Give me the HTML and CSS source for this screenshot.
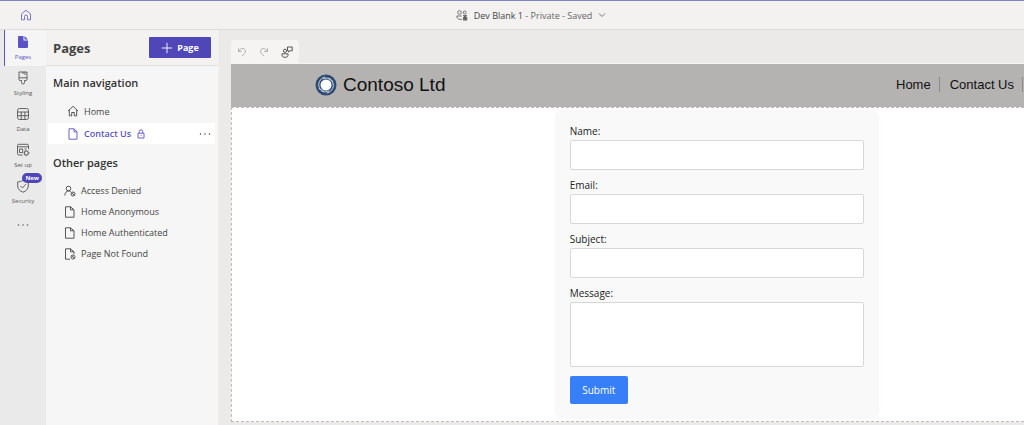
FILE: index.html
```
<!DOCTYPE html>
<html lang="en">
<head>
    <meta charset="UTF-8">
    <meta name="viewport" content="width=device-width, initial-scale=1.0">
    <title>Dev Blank 1 - Pages</title>
    <link rel="stylesheet" href="styles.css">
</head>
<body>
    <header class="topbar">
        <a href="#" class="home-link" aria-label="Home">
            <svg class="icon" viewBox="0 0 12 12"><path d="M1.500 5 6 1.200 10.500 5v5.800H7.500V7.500a1.500 1.500 0 0 0-3 0v3.300h-3z"/></svg>
        </a>
        <button class="site-status">
            <svg class="icon" viewBox="0 0 12 12"><circle cx="3.500" cy="3.500" r="1.800"/><circle cx="8.700" cy="3.500" r="1.500"/><path d="M6 10.300C2.800 11 .8 9.600.8 7h5M7 6.500h4"/><path class="solid" d="M7 8h.8V6.800h2.500V8h.9v3.500H7z"/></svg>
            <span><span class="site-name">Dev Blank 1</span> - Private - Saved</span>
            <svg class="chevron" viewBox="0 0 8 8"><path d="M1 2.500 4 5.500l3-3"/></svg>
        </button>
    </header>

    <div class="workspace">
        <nav class="rail">
            <button class="rail-item active">
                <svg class="rail-icon" viewBox="0 0 14 14"><path class="solid" d="M3 1h4.500v4.500H12V12a1 1 0 0 1-1 1H3a1 1 0 0 1-1-1V2a1 1 0 0 1 1-1zM8.500 1 12 4.500H8.500z"/></svg>
                Pages
            </button>
            <button class="rail-item">
                <svg class="rail-icon" viewBox="0 0 14 14"><path d="M3 1h8v7.500a1 1 0 0 1-1 1H8.500v2a1.500 1.500 0 0 1-3 0v-2H4a1 1 0 0 1-1-1zM3 6.800h8M7 1v2M9 1v3"/></svg>
                Styling
            </button>
            <button class="rail-item">
                <svg class="rail-icon" viewBox="0 0 14 14"><rect x="1.500" y="1.500" width="11" height="11" rx="2"/><path d="M1.500 5h11M1.500 8.700h11M5.200 5v7.500M8.900 5v7.500"/></svg>
                Data
            </button>
            <button class="rail-item">
                <svg class="rail-icon" viewBox="0 0 14 14"><path d="M6.500 12H3a1.500 1.500 0 0 1-1.500-1.500v-8A1.200 1.200 0 0 1 2.700 1.300h8.600a1.200 1.200 0 0 1 1.200 1.200V6M1.500 3.800h11M3.500 6h3.200v3.500H3.500zM8.500 6h2"/><circle cx="10.300" cy="10" r="2"/><path d="M10.300 7v1M10.300 12v1.300M7.500 10h1M12.300 10h1.300M8.300 8l.7.700M11.600 11.300l.8.800M12.400 8l-.8.700M9 11.300l-.8.800"/></svg>
                Set up
            </button>
            <button class="rail-item">
                <svg class="rail-icon" viewBox="0 0 14 14"><path d="M7 1C5.500 2.300 3.700 2.800 1.700 2.900V7c0 3 2 5 5.300 6.200C10.300 12 12.300 10 12.300 7V2.900C10.300 2.800 8.500 2.300 7 1zM4.500 7l1.900 1.900 3.500-3.700"/></svg>
                Security
                <span class="badge">New</span>
            </button>
            <button class="rail-item rail-more" aria-label="More">
                <svg class="rail-icon" viewBox="0 0 14 14"><path class="dots" d="M2.500 7h.01M7 7h.01M11.500 7h.01"/></svg>
            </button>
        </nav>

        <aside class="panel">
            <div class="panel-header">
                <h1>Pages</h1>
                <button class="add-page">
                    <svg class="icon" viewBox="0 0 12 12"><path d="M6 .8v10.400M.8 6h10.400"/></svg>
                    Page
                </button>
            </div>

            <h2>Main navigation</h2>
            <ul class="page-list main-list">
                <li>
                    <a href="#">
                        <svg class="icon" viewBox="0 0 12 12"><path d="M1 6 6 1.300 11 6M2.300 5v5.800h2.400V7.500h2.600v3.300h2.400V5"/></svg>
                        Home
                    </a>
                </li>
                <li class="selected">
                    <a href="#">
                        <svg class="icon" viewBox="0 0 12 12"><path d="M2 .8h5l3 3v7.400H2zM7 .8v3h3"/></svg>
                        Contact Us
                        <svg class="lock" viewBox="0 0 10 10"><path d="M2 4.200h6v4.800H2zM3.300 4.200V2.500a1.700 1.700 0 0 1 3.400 0v1.700M5 6.200v.8"/></svg>
                    </a>
                    <button class="more" aria-label="More options">
                        <svg class="icon" viewBox="0 0 12 12"><path class="dots" d="M1.500 6h.01M6 6h.01M10.500 6h.01"/></svg>
                    </button>
                </li>
            </ul>

            <h2>Other pages</h2>
            <ul class="page-list other-list">
                <li>
                    <a href="#">
                        <svg class="icon" viewBox="0 0 12 12"><circle cx="4.500" cy="3.500" r="2.300"/><path d="M.8 10.500C1 7.500 2.500 6 4.500 6c1 0 1.800.3 2.300.8"/><circle cx="9" cy="9" r="2"/><path d="m7.600 7.600 2.800 2.800"/></svg>
                        Access Denied
                    </a>
                </li>
                <li>
                    <a href="#">
                        <svg class="icon" viewBox="0 0 12 12"><path d="M1.500.8h5l3.500 3v7.400H1.500zM6.500.8v3H10"/></svg>
                        Home Anonymous
                    </a>
                </li>
                <li>
                    <a href="#">
                        <svg class="icon" viewBox="0 0 12 12"><path d="M1.500.8h5l3.500 3v7.400H1.500zM6.500.8v3H10"/></svg>
                        Home Authenticated
                    </a>
                </li>
                <li>
                    <a href="#">
                        <svg class="icon" viewBox="0 0 12 12"><path d="M6 11.200H1.500V.8h5l3.500 3V6M6.500.8v3H10"/><circle cx="9" cy="9" r="2"/><path d="m7.600 7.600 2.800 2.800"/></svg>
                        Page Not Found
                    </a>
                </li>
            </ul>
        </aside>

        <main class="canvas">
            <div class="toolbar">
                <button class="tool" aria-label="Undo" disabled>
                    <svg class="tool-icon" viewBox="0 0 10 10"><path d="M1.500 1.200v3.300h3.300M1.700 4.300C3.500 1.500 5.500 1 7 1.800c1.800 1 2 3.200.7 4.600L5 9"/></svg>
                </button>
                <button class="tool" aria-label="Redo" disabled>
                    <svg class="tool-icon" viewBox="0 0 10 10"><path d="M8.500 1.200v3.300H5.200M8.300 4.300C6.500 1.500 4.500 1 3 1.800c-1.800 1-2 3.200-.7 4.600L5 9"/></svg>
                </button>
                <button class="tool" aria-label="Feedback">
                    <svg class="icon" viewBox="0 0 12 12"><circle cx="4" cy="4.800" r="1.600"/><path d="M1 7.800h6v1.400C7 10.700 5.800 11.300 4 11.300S1 10.700 1 9.200zM6.500 1h4.700v3.800H8.800L7.500 6V4.800h-1z"/></svg>
                </button>
            </div>

            <div class="site">
                <div class="site-header">
                    <a href="#" class="brand">
                        <svg class="logo" viewBox="0 0 22 22">
                            <circle class="logo-disc" cx="11" cy="11" r="10.500"/>
                            <circle class="logo-hole" cx="11" cy="11" r="5.500"/>
                            <path class="logo-swirl" d="M9 17.500C4.500 16 2.500 11.500 4.500 7.500 5.500 5.300 7.500 3.500 10 3M13 4.500c4.500 1.500 6.500 6 4.500 10-1 2.200-3 4-5.500 4.500M8 5c4-2 8-.5 10 3M14 17c-4 2-8 .5-10-3"/>
                        </svg>
                        Contoso Ltd
                    </a>
                    <nav class="site-nav">
                        <a href="#">Home</a>
                        <a href="#">Contact Us</a>
                    </nav>
                </div>
                <div class="site-body">
                    <form class="contact-form">
                        <label for="name">Name:</label>
                        <input type="text" id="name" name="name">
                        <label for="email">Email:</label>
                        <input type="email" id="email" name="email">
                        <label for="subject">Subject:</label>
                        <input type="text" id="subject" name="subject">
                        <label for="message">Message:</label>
                        <textarea id="message" name="message"></textarea>
                        <button type="submit" class="submit">Submit</button>
                    </form>
                </div>
            </div>
        </main>
    </div>
</body>
</html>
```

FILE: styles.css
```
* {
    box-sizing: border-box;
}

body {
    margin: 0;
    min-height: 100vh;
    display: flex;
    flex-direction: column;
    background: #ebeae9;
    color: #444;
    font-family: "Open Sans", "Noto Sans", sans-serif;
    font-size: 9px;
    overflow-x: hidden;
}

button {
    font-family: inherit;
    color: inherit;
    background: none;
    border: none;
    padding: 0;
}

a {
    color: inherit;
    text-decoration: none;
}

svg {
    fill: none;
    stroke: currentColor;
    stroke-width: 0.9;
    flex-shrink: 0;
}

.icon {
    width: 12px;
    height: 12px;
}

.solid {
    fill: currentColor;
    stroke: none;
}

.dots {
    stroke-width: 1.5;
    stroke-linecap: round;
}

/* top bar */
.topbar {
    display: grid;
    grid-template-columns: 1fr auto 1fr;
    align-items: center;
    height: 30px;
    padding-left: 20px;
    background: #f3f2f1;
    border-top: 1px solid #8481cc;
    border-bottom: 1px solid #dcdbda;
}

.home-link {
    display: flex;
    color: #6b66c9;
}

.site-status {
    display: flex;
    align-items: center;
    gap: 6px;
    padding-left: 18px;
    font-size: 9px;
    color: #666;
}

.site-name {
    color: #444;
}

.chevron {
    width: 8px;
    height: 8px;
}

.workspace {
    flex: 1;
    display: flex;
}

/* left rail */
.rail {
    width: 46px;
    flex-shrink: 0;
    background: #eaeaea;
}

.rail-item {
    position: relative;
    display: flex;
    flex-direction: column;
    align-items: center;
    justify-content: center;
    gap: 4px;
    width: 100%;
    height: 36px;
    font-size: 6px;
    line-height: 8px;
    color: #555;
}

.rail-item.active {
    background: #f5f5f5;
    color: #5b53c4;
    border-left: 4px solid #eaeaea;
    box-shadow: inset 1px 0 #5b53c4;
    padding-right: 4px;
}

.rail-more {
    height: 30px;
}

.rail-icon {
    width: 14px;
    height: 14px;
}

.badge {
    position: absolute;
    top: -1px;
    right: 4px;
    padding: 0 3px;
    border-radius: 5px;
    background: #4f46b8;
    color: #fff;
    font-size: 6px;
    font-weight: 700;
    line-height: 10px;
}

/* pages panel */
.panel {
    width: 173px;
    flex-shrink: 0;
    background: #f6f6f6;
    border-right: 1px solid #efefee;
}

.panel-header {
    display: flex;
    align-items: center;
    justify-content: space-between;
    height: 36px;
    padding: 0 7px;
    background: #f3f2f1;
    border-bottom: 1px solid #e0dfde;
}

h1 {
    margin: 0;
    font-size: 13px;
    font-weight: 700;
}

.add-page {
    display: flex;
    align-items: center;
    justify-content: center;
    gap: 4px;
    width: 62px;
    height: 21px;
    border-radius: 1px;
    background: #4f46b8;
    color: #fff;
    font-size: 9px;
    font-weight: 700;
}

h2 {
    margin: 0;
    padding: 9px 7px;
    font-size: 11px;
    font-weight: 600;
    line-height: 16px;
    color: #333;
}

.page-list {
    list-style: none;
    margin: 0;
    padding: 0 3px 0 2px;
}

.page-list li,
.page-list a {
    display: flex;
    align-items: center;
}

.page-list li {
    justify-content: space-between;
}

.page-list a {
    gap: 5px;
}

.main-list {
    margin-bottom: 2px;
}

.main-list li {
    height: 22px;
    padding: 0 4px 0 19px;
}

.main-list .selected {
    height: 21px;
    margin: 1px 0;
    background: #fff;
}

.selected a {
    color: #5b53c4;
    font-weight: 600;
}

.lock {
    width: 10px;
    height: 10px;
}

.more {
    display: flex;
}

.other-list li {
    height: 21px;
    padding-left: 16px;
}

/* design canvas */
.canvas {
    flex: 1;
    min-width: 0;
    padding: 10px 0 2px 12px;
}

.toolbar {
    display: inline-flex;
    align-items: center;
    gap: 12px;
    height: 23px;
    padding: 0 6px;
    border-radius: 3px 3px 0 0;
    background: #f5f4f3;
    vertical-align: top;
}

.tool {
    display: flex;
}

.tool:disabled {
    color: #aaa;
}

.tool-icon {
    width: 10px;
    height: 10px;
}

.site {
    border-top: 1px solid #f5f5f5;
}

.site-header {
    display: flex;
    align-items: center;
    justify-content: space-between;
    height: 43px;
    padding: 0 0 2px 84px;
    background: #b4b3b1;
    color: #111;
    font-family: "Liberation Sans", Arial, sans-serif;
}

.brand {
    display: flex;
    align-items: center;
    gap: 6px;
    font-size: 19px;
}

.logo {
    width: 22px;
    height: 22px;
}

.logo-disc {
    fill: #304b73;
    stroke: none;
}

.logo-hole {
    fill: #fff;
    stroke: none;
}

.logo-swirl {
    stroke: #dfe5ed;
}

.site-nav {
    display: flex;
    font-size: 13px;
}

.site-nav a {
    padding: 0 8px 0 9px;
    border-right: 1px solid #8b8b8a;
    margin-right: 1px;
}

.site-body {
    padding: 4px 0;
    background: #fff;
    border: 1px dashed #bbb;
    border-right: none;
}

/* contact form */
.contact-form {
    width: 320px;
    margin-left: 41%;
    padding: 13px;
    border-radius: 4px;
    background: #f9f9f9;
    box-shadow: 0 0 4px rgba(0, 0, 0, 0.08);
}

.contact-form label {
    display: block;
    margin-bottom: 2px;
    color: #222;
    font-size: 10px;
    line-height: 13px;
}

.contact-form input,
.contact-form textarea {
    display: block;
    width: 100%;
    height: 30px;
    margin: 0 0 9px;
    padding: 6px;
    border: 1px solid #d8d8d8;
    border-radius: 2px;
    background: #fff;
    font-family: inherit;
    font-size: 10px;
}

.contact-form textarea {
    height: 65px;
    resize: none;
}

.submit {
    display: block;
    width: 58px;
    height: 28px;
    border-radius: 2px;
    background: #367ff9;
    color: #fff;
    font-size: 10px;
}
```
